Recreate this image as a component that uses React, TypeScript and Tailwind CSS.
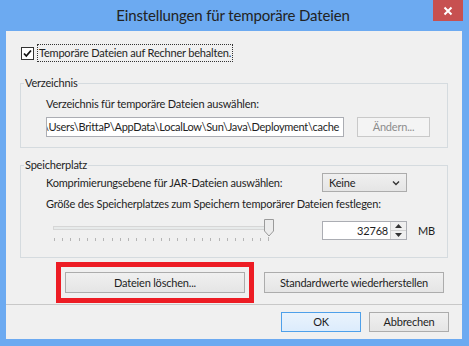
import React from "react";

const ui = "font-['Lato','Liberation_Sans',sans-serif] text-[11px] tracking-[-0.2px] leading-4 text-[#1e1e1e]";

function WinButton({ children, className = "" }: { children: React.ReactNode; className?: string }) {
  return (
    <div
      className={`flex items-center justify-center border border-[#acacac] bg-gradient-to-b from-[#f0f0f0] to-[#e5e5e5] ${className}`}
    >
      {children}
    </div>
  );
}

function Slider() {
  const ticks = Array.from({ length: 27 }, (_, i) => 1 + i * 8.23);
  return (
    <svg width="230" height="22" viewBox="0 0 230 22" className="block">
      <rect x="0.5" y="7.5" width="216" height="3" fill="#e7eaea" stroke="#d6d6d6" />
      {ticks.map((x, i) => (
        <line
          key={i}
          x1={Math.round(x) + 0.5}
          x2={Math.round(x) + 0.5}
          y1={i === ticks.length - 1 ? 18 : 19}
          y2="22"
          stroke="#b5b5b5"
        />
      ))}
      <path d="M211.5 0.5 H220.5 V12 L216 17 L211.5 12 Z" fill="#ececec" stroke="#9a9a9a" />
    </svg>
  );
}

export default function App() {
  return (
    <div className={`${ui} w-[469px] h-[346px] bg-[#6caaf1] flex flex-col pl-[6px] pr-[7px] pb-[7px] relative`}>
      <div className="h-[31px] flex items-center justify-center pr-[2px]">
        <span className="text-[15px] tracking-[-0.15px] text-[#222] leading-5 -mt-[2px]">Einstellungen für temporäre Dateien</span>
      </div>
      <div className="absolute top-0 right-[6px] w-[30px] h-[21px] bg-[#c75050] flex items-center justify-center">
        <svg width="10" height="10" viewBox="0 0 10 10">
          <path d="M1.5 1.5 L8.5 8.5 M8.5 1.5 L1.5 8.5" stroke="#fff" strokeWidth="2" />
        </svg>
      </div>

      <div className="h-[308px] bg-[#f0f0f0] flex flex-col">
        <div className="mt-[14px] h-[16px] flex items-center">
          <div className="ml-[15px] w-[13px] h-[13px] border border-[#333] bg-white flex items-center justify-center">
            <svg width="11" height="11" viewBox="0 0 11 11">
              <path d="M2 5.5 L4.3 8 L9 2.5" fill="none" stroke="#111" strokeWidth="1.8" />
            </svg>
          </div>
          <span className="ml-[4px] px-[1px] outline-1 outline-dotted outline-[#333]">Temporäre Dateien auf Rechner behalten.</span>
        </div>

        <fieldset className="mt-[14px] mx-[14px] border border-[#d5dbdf]">
          <legend className="ml-[3px] px-[1px] h-[16px]">Verzeichnis</legend>
          <div className="pl-[25px] pb-[10px]">
            <div className="mt-[5px] h-[16px]">Verzeichnis für temporäre Dateien auswählen:</div>
            <div className="mt-[5px] flex">
              <div className="w-[298px] h-[20px] border border-[#abadb3] bg-white flex items-center justify-end overflow-hidden pr-[4px] whitespace-nowrap tracking-[-0.3px]">
                C:\Users\BrittaP\AppData\LocalLow\Sun\Java\Deployment\cache
              </div>
              <div className="ml-[13px] w-[73px] h-[20px] border border-[#c9c9c9] bg-[#f4f4f4] flex items-center justify-center text-[#8d8d8d]">
                Ändern...
              </div>
            </div>
          </div>
        </fieldset>

        <fieldset className="mt-[9px] mx-[14px] border border-[#d5dbdf]">
          <legend className="ml-[3px] px-[1px] h-[16px]">Speicherplatz</legend>
          <div className="pl-[25px] pb-[16px]">
            <div className="flex items-center h-[19px]">
              <div className="w-[276px]">Komprimierungsebene für JAR-Dateien auswählen:</div>
              <WinButton className="w-[85px] h-[19px] !justify-between pl-[6px] pr-[6px]">
                <span>Keine</span>
                <svg width="8" height="6" viewBox="0 0 8 6">
                  <path d="M1 1.5 L4 4.5 L7 1.5" fill="none" stroke="#333" strokeWidth="1.4" />
                </svg>
              </WinButton>
            </div>
            <div className="mt-[4px] h-[16px]">Größe des Speicherplatzes zum Speichern temporärer Dateien festlegen:</div>
            <div className="mt-[7px] flex items-start">
              <div className="w-[276px] pl-[7px]">
                <Slider />
              </div>
              <div className="mt-[2px] w-[85px] h-[19px] border border-[#abadb3] bg-white flex">
                <div className="flex-1 flex items-center justify-end pr-[2px]">32768</div>
                <div className="w-[16px] flex flex-col border-l border-[#d0d0d0]">
                  <div className="flex-1 flex items-center justify-center bg-[#efefef] border-b border-[#d0d0d0]">
                    <svg width="7" height="4" viewBox="0 0 7 4">
                      <path d="M0 4 L3.5 0 L7 4 Z" fill="#333" />
                    </svg>
                  </div>
                  <div className="flex-1 flex items-center justify-center bg-[#efefef]">
                    <svg width="7" height="4" viewBox="0 0 7 4">
                      <path d="M0 0 L3.5 4 L7 0 Z" fill="#333" />
                    </svg>
                  </div>
                </div>
              </div>
              <div className="ml-[11px] mt-[4px]">MB</div>
            </div>
          </div>
        </fieldset>

        <div className="mt-[4px] flex items-center h-[41px]">
          <div className="ml-[50px] border-[5px] border-[#ed1c24] px-[4px] py-[5px] bg-[#f0f0f0]">
            <WinButton className="w-[180px] h-[21px]">Dateien löschen...</WinButton>
          </div>
          <WinButton className="ml-[10px] w-[180px] h-[21px]">Standardwerte wiederherstellen</WinButton>
        </div>

        <div className="mt-[1px] border-t border-[#c8c8c8]" />

        <div className="flex justify-end pt-[7px] pr-[13px]">
          <div className="w-[80px] h-[20px] border border-[#4ea0ea] bg-gradient-to-b from-[#eaf3fc] to-[#dcecfc] flex items-center justify-center">
            OK
          </div>
          <WinButton className="ml-[8px] w-[80px] h-[20px]">Abbrechen</WinButton>
        </div>
      </div>
    </div>
  );
}
